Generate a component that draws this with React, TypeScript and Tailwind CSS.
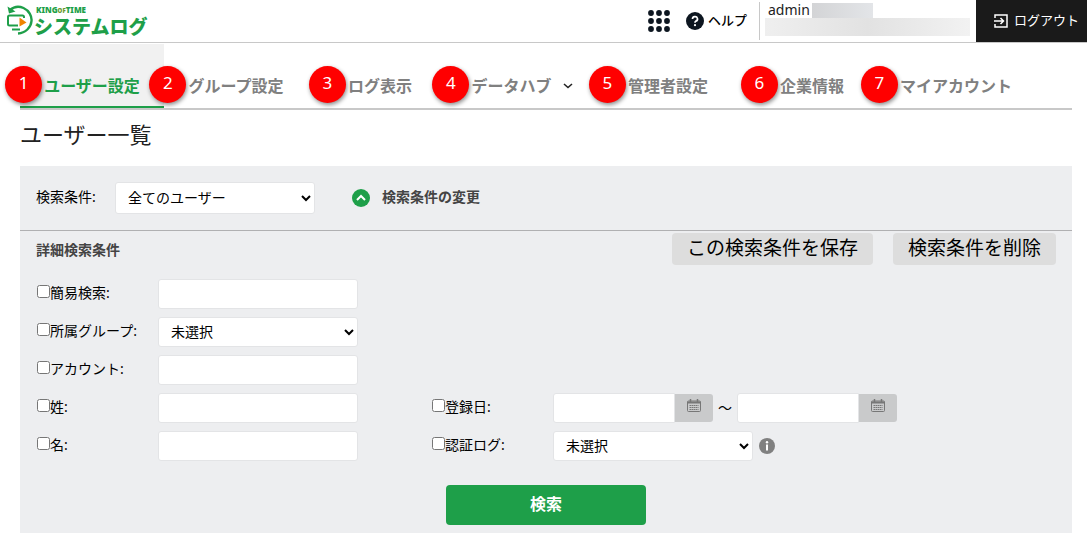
import { ReactNode } from 'react'

interface NavItem {
  label: string
  active?: boolean
  menu?: boolean
}

const navItems: NavItem[] = [
  { label: 'ユーザー設定', active: true },
  { label: 'グループ設定' },
  { label: 'ログ表示' },
  { label: 'データハブ', menu: true },
  { label: '管理者設定' },
  { label: '企業情報' },
  { label: 'マイアカウント' },
]

const fieldClass = 'w-[200px] h-[30px] bg-white border border-[#e3e4e6] rounded-[3px] text-sm'

function Logo() {
  return (
    <a href="#" className="flex items-start gap-px pl-[6px] pt-[5px]" aria-label="KING OF TIME システムログ">
      <svg width="27" height="30" viewBox="0 0 27 30" fill="none">
        <path d="M4 5C8 1.500 13 1 17.500 3C23 5.500 26 11 25.500 16C25 22.500 19.500 28 12 28.500" stroke="#1e9f49" strokeWidth="2.400" />
        <path d="M1.500 1.500L3 8.500L9.500 6.500Z" fill="#1e9f49" />
        <path d="M12 20.500H3.500A1.500 1.500 0 0 1 2 19V12A1.500 1.500 0 0 1 3.500 10.500H16.500A1.500 1.500 0 0 1 18 12V13" stroke="#1e9f49" strokeWidth="2" />
        <path d="M6 24.500H14" stroke="#1e9f49" strokeWidth="2" />
        <path d="M13.500 12.500L20.500 17.500L13.500 21.500Z" fill="#f08300" />
      </svg>
      <span className="flex flex-col text-[#1e9f49] font-black">
        <span className="text-[8px] leading-[9px] pl-[2px]">
          KING<span className="text-[6px] text-[#6b9a2b]">OF</span>TIME
        </span>
        <span className="text-[19px] leading-[22px]">システムログ</span>
      </span>
    </a>
  )
}

function Header() {
  return (
    <header className="flex h-[43px] border-b border-[#c8c8c8]">
      <Logo />
      <div className="flex ml-auto">
        <button type="button" aria-label="アプリ一覧" className="mr-4">
          <svg width="22" height="22" viewBox="0 0 22 22" fill="#0d1620">
            {[3, 11, 19].map((y) => [3, 11, 19].map((x) => <circle key={`${x}-${y}`} cx={x} cy={y} r="2.900" />))}
          </svg>
        </button>
        <a href="#" className="flex items-center gap-1 mr-3 text-[13px] font-medium text-black">
          <svg width="18" height="18" viewBox="0 0 18 18">
            <circle cx="9" cy="9" r="9" fill="#0d1620" />
            <path d="M6.500 7A2.500 2.300 0 1 1 9.900 9.100Q9 9.500 9 10.700" stroke="#fff" strokeWidth="1.700" fill="none" />
            <circle cx="9" cy="13.200" r="1.100" fill="#fff" />
          </svg>
          ヘルプ
        </a>
        <div className="w-[217px] my-[2px] pl-[5px] border-l border-[#c8c8c8]">
          <div className="flex items-center gap-[2px] h-4 pl-[3px] text-sm text-[#222]">
            admin
            <span className="w-[61px] h-[15px] bg-linear-to-r from-[#d3d4d6] to-[#e3e5e8]" />
          </div>
          <div className="w-[205px] h-[18px] bg-linear-to-r from-[#efefef] via-[#e2e2e2] to-[#f2f2f2]" />
        </div>
        <button type="button" className="flex items-center gap-[6px] pl-[18px] pr-2 bg-[#1a1a1a] text-white text-[13px]">
          <svg width="14" height="14" viewBox="0 0 14 14" fill="none" stroke="#fff" strokeWidth="1.500">
            <path d="M1 4V1H13V13H1V10" />
            <path d="M0 7H9M6.500 4L9.500 7L6.500 10" />
          </svg>
          ログアウト
        </button>
      </div>
    </header>
  )
}

function Nav() {
  return (
    <nav className="flex mt-px border-b-2 border-[#c8c8c8]">
      {navItems.map((item, i) => (
        <a
          key={item.label}
          href="#"
          className={`flex justify-center w-36 h-16 pt-[30px] border-b-2 font-bold text-base leading-6 whitespace-nowrap ${
            item.active ? 'bg-[#f1f1f1] border-[#1e9f49] text-[#1e9f49]' : 'border-transparent text-[#808080]'
          }`}
        >
          <span className="relative flex items-center h-6">
            <span className="absolute right-full top-[-8px] mr-[2px] flex justify-center w-[37px] h-[37px] rounded-full bg-[#f00] text-white text-[17px] leading-[34px] font-normal shadow-[1px_2px_4px_rgba(0,0,0,0.45)]">
              {i + 1}
            </span>
            {item.label}
            {item.menu && (
              <svg width="10" height="6" viewBox="0 0 10 6" className="ml-[11px] mr-1" fill="none" stroke="#222" strokeWidth="1.600">
                <path d="M1 1L5 4.500L9 1" />
              </svg>
            )}
          </span>
        </a>
      ))}
    </nav>
  )
}

function Condition({ id, label, children }: { id: string; label: string; children: ReactNode }) {
  return (
    <div className="flex items-center">
      <div className="flex items-center w-[122px] pl-px shrink-0">
        <input type="checkbox" id={`${id}-on`} className="w-[13px] h-[13px] mb-[6px]" />
        <label htmlFor={`${id}-on`} className="leading-7 mb-[2px]">
          {label}:
        </label>
      </div>
      {children}
    </div>
  )
}

function DateField({ label }: { label: string }) {
  return (
    <div className="flex h-[30px]">
      <input type="text" aria-label={label} className="w-[122px] bg-white border border-[#e3e4e6] rounded-l-[3px]" />
      <button type="button" aria-label={`${label}を選択`} className="flex justify-center w-[38px] h-7 mt-px pt-[5px] bg-[#c9cacb] rounded-r-[3px]">
        <svg width="14" height="13" viewBox="0 0 14 13" fill="none" stroke="#777">
          <rect x="0.500" y="2" width="13" height="10.500" rx="1" />
          <path d="M0.500 3.500H13.500" strokeWidth="2" />
          <path d="M3.500 0V3M10.500 0V3" strokeWidth="1.500" />
          <path d="M2.500 6.500H11.500M2.500 8.500H11.500M2.500 10.500H11.500" strokeDasharray="1.500 0.500" />
        </svg>
      </button>
    </div>
  )
}

function SearchPanel() {
  return (
    <form className="bg-[#edeef0] text-sm text-black pb-2">
      <div className="flex items-center h-16 px-4 border-b border-[#b0b0b2] box-content">
        <label htmlFor="condition" className="w-[79px] mb-[2px]">
          検索条件:
        </label>
        <select id="condition" className="w-[200px] h-8 pl-2 pb-[2px] bg-white border border-[#e3e4e6] rounded-[3px]">
          <option>全てのユーザー</option>
        </select>
        <button type="button" className="flex items-center gap-3 ml-[37px] font-bold text-[#444]">
          <svg width="18" height="18" viewBox="0 0 18 18">
            <circle cx="9" cy="9" r="9" fill="#1e9f49" />
            <path d="M5 11L9 7L13 11" stroke="#fff" strokeWidth="2" fill="none" />
          </svg>
          <span className="mb-[2px]">検索条件の変更</span>
        </button>
      </div>

      <div className="flex items-start px-4 pt-[2px]">
        <h2 className="font-bold text-[#444] leading-8 pt-px">詳細検索条件</h2>
        <div className="flex gap-5 ml-auto">
          <button type="button" className="h-8 px-[15px] pb-[2px] bg-[#ddd] rounded-[4px] text-[19px] leading-7">
            この検索条件を保存
          </button>
          <button type="button" className="h-8 px-[15px] pb-[2px] bg-[#ddd] rounded-[4px] text-[19px] leading-7">
            検索条件を削除
          </button>
        </div>
      </div>

      <div className="grid grid-cols-[395px_1fr] px-4 pt-[13px]">
        <div className="flex flex-col gap-2">
          <Condition id="simple" label="簡易検索">
            <input type="text" aria-label="簡易検索" className={fieldClass} />
          </Condition>
          <Condition id="group" label="所属グループ">
            <select aria-label="所属グループ" className={`${fieldClass} pl-2 pb-[2px]`}>
              <option>未選択</option>
            </select>
          </Condition>
          <Condition id="account" label="アカウント">
            <input type="text" aria-label="アカウント" className={fieldClass} />
          </Condition>
          <Condition id="last-name" label="姓">
            <input type="text" aria-label="姓" className={fieldClass} />
          </Condition>
          <Condition id="first-name" label="名">
            <input type="text" aria-label="名" className={fieldClass} />
          </Condition>
        </div>
        <div className="flex flex-col justify-end gap-2">
          <Condition id="registered" label="登録日">
            <DateField label="登録日の開始" />
            <span className="w-6 text-center">～</span>
            <DateField label="登録日の終了" />
          </Condition>
          <Condition id="auth-log" label="認証ログ">
            <select aria-label="認証ログ" className={`${fieldClass} pl-2 pb-[2px]`}>
              <option>未選択</option>
            </select>
            <svg width="16" height="16" viewBox="0 0 16 16" className="ml-[6px]">
              <circle cx="8" cy="8" r="8" fill="#808080" />
              <path d="M8 6.500V12.500" stroke="#fff" strokeWidth="2" fill="none" />
              <circle cx="8" cy="4.300" r="1.200" fill="#fff" />
            </svg>
          </Condition>
        </div>
      </div>

      <button type="submit" className="block w-[200px] h-10 mt-6 mx-auto pb-[2px] bg-[#1e9f49] rounded-[4px] text-white text-base font-bold">
        検索
      </button>
    </form>
  )
}

export default function App() {
  return (
    <div className="bg-white font-['Noto_Sans','Noto_Sans_CJK_JP',sans-serif]">
      <Header />
      <main className="ml-5 mr-[15px]">
        <Nav />
        <h1 className="pt-2 pb-4 text-[22px] leading-8 text-[#222]">ユーザー一覧</h1>
        <SearchPanel />
      </main>
    </div>
  )
}
